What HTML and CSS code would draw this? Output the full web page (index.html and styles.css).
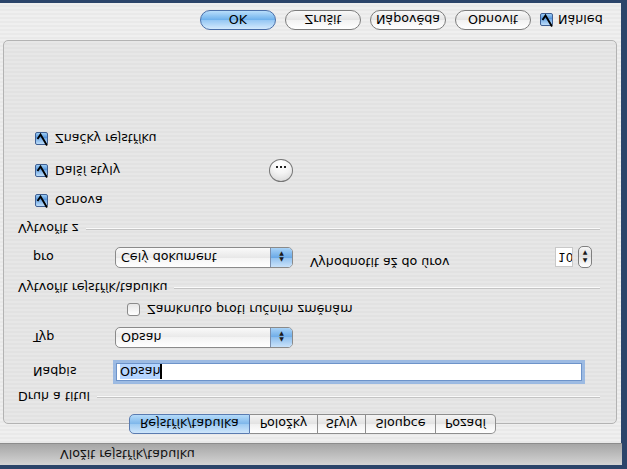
FILE: index.html
```html
<!DOCTYPE html>
<html lang="cs">
<head>
<meta charset="utf-8">
<title>Vložit rejstřík/tabulku</title>
<link rel="stylesheet" href="styles.css">
</head>
<body>
<div class="screen">
  <div class="window">
    <div class="titlebar">Vložit rejstřík/tabulku</div>
    <div class="body">
      <div class="tabs">
        <div class="tab tab-active t1">Rejstřík/tabulka</div>
        <div class="tab t2">Položky</div>
        <div class="tab t3">Styly</div>
        <div class="tab t4">Sloupce</div>
        <div class="tab t5">Pozadí</div>
      </div>
      <div class="panel">
        <div class="heading h1"><span>Druh a titul</span><i class="rule"></i></div>
        <div class="row r-nadpis">
          <span class="label">Nadpis</span>
          <div class="field"><span class="sel">Obsah</span><span class="caret"></span></div>
        </div>
        <div class="row r-typ">
          <span class="label">Typ</span>
          <div class="popup"><span class="pv">Obsah</span><span class="arrows"><b>▲</b><b>▼</b></span></div>
        </div>
        <div class="row r-zam">
          <span class="cb off"></span><span class="cbl">Zamknuto proti ručním změnám</span>
        </div>
        <div class="heading h2"><span>Vytvořit rejstřík\tabulku</span><i class="rule"></i></div>
        <div class="row r-pro">
          <span class="label">pro</span>
          <div class="popup"><span class="pv">Celý dokument</span><span class="arrows"><b>▲</b><b>▼</b></span></div>
          <span class="vyh">Vyhodnotit až do úrov</span>
          <div class="num">10</div>
          <div class="stepper"><b>▲</b><b>▼</b></div>
        </div>
        <div class="heading h3"><span>Vytvořit z</span><i class="rule"></i></div>
        <div class="row r-osn">
          <span class="cb on"><svg viewBox="0 0 13 13" width="13" height="13"><path d="M2.5 6 L5.5 10.5 L12 -0.5" fill="none" stroke="#000" stroke-width="1.9"/></svg></span><span class="cbl">Osnova</span>
        </div>
        <div class="row r-dal">
          <span class="cb on"><svg viewBox="0 0 13 13" width="13" height="13"><path d="M2.5 6 L5.5 10.5 L12 -0.5" fill="none" stroke="#000" stroke-width="1.9"/></svg></span><span class="cbl wide">Další styly</span>
          <div class="dots"><i></i><i></i><i></i></div>
        </div>
        <div class="row r-zn">
          <span class="cb on"><svg viewBox="0 0 13 13" width="13" height="13"><path d="M2.5 6 L5.5 10.5 L12 -0.5" fill="none" stroke="#000" stroke-width="1.9"/></svg></span><span class="cbl">Značky rejstříku</span>
        </div>
      </div>
      <div class="buttons">
        <div class="btn btn-def">OK</div>
        <div class="btn">Zrušit</div>
        <div class="btn">Nápověda</div>
        <div class="btn">Obnovit</div>
        <span class="cb on nah"><svg viewBox="0 0 13 13" width="13" height="13"><path d="M2.5 6 L5.5 10.5 L12 -0.5" fill="none" stroke="#000" stroke-width="1.9"/></svg></span><span class="cbl">Náhled</span>
      </div>
    </div>
  </div>
</div>
</body>
</html>
```
FILE: styles.css
```css
html, body { margin: 0; padding: 0; }
body { background: #2c456a; }
.screen {
  width: 627px; height: 469px; overflow: hidden;
  background: #2c456a;
  transform: scaleY(-1);
  font-family: "DejaVu Sans", "Liberation Sans", sans-serif;
  font-size: 12.7px; color: #000;
}
.window {
  width: 621px; height: 462px; margin-top: 4px;
  background: repeating-linear-gradient(180deg, #efefef 0 2px, #e9e9e9 2px 4px);
  display: flex; flex-direction: column;
}
.titlebar {
  width: 622px; height: 22px; box-sizing: border-box;
  background: linear-gradient(#d4d4d4, #a6a6a6);
  border-bottom: 1px solid #8c8c8c;
  padding-left: 60px; display: flex; align-items: center;
  color: #111;
}
.body { padding: 9px 0 0 3px; display: flex; flex-direction: column; }
.tabs {
  display: flex; margin-left: 126px; height: 20px; margin-bottom: -10px;
  position: relative; z-index: 1;
}
.tab {
  height: 20px; box-sizing: border-box;
  display: flex; align-items: center; justify-content: center;
  background: linear-gradient(#ffffff, #f0f0f0 50%, #e2e2e2 50%, #f4f4f4);
  border: 1px solid #8e8e8e; border-left: none;
}
.t1 { width: 121px; border-left: 1px solid #5a7bb0; border-radius: 5px 0 0 5px; }
.t2 { width: 68px; }
.t3 { width: 48px; }
.t4 { width: 70px; }
.t5 { width: 60px; border-radius: 0 5px 5px 0; }
.tab-active {
  background: linear-gradient(#cfe6fb, #9ccaf2 50%, #7db6ea 50%, #b4dbfa);
  border-color: #5a7bb0;
}
.panel {
  width: 614px; height: 384px; box-sizing: border-box;
  border: 1px solid #b3b3b3; border-radius: 5px;
  background: repeating-linear-gradient(180deg, #e7e7e7 0 2px, #e2e2e2 2px 4px);
  padding-top: 18px;
  display: flex; flex-direction: column;
}
.heading {
  height: 16px; display: flex; align-items: center;
  padding-left: 14px; padding-right: 16px;
}
.rule { flex: 1; height: 0; border-top: 1px solid #c4c4c4; border-bottom: 1px solid #fafafa; margin-left: 7px; }
.row { display: flex; align-items: center; padding-left: 29px; }
.label { width: 80px; flex: none; }
.r-nadpis { height: 22px; margin-top: 6px; }
.field {
  width: 466px; height: 18px; margin-left: 3px; box-sizing: border-box;
  background: #fff; border: 1px solid #6d93c9;
  box-shadow: 0 0 0 3px rgba(125, 168, 225, 0.7);
  display: flex; align-items: center; padding-left: 3px;
}
.sel { background: #b5d5ff; }
.caret { width: 2px; height: 15px; background: #000; }
.r-typ { height: 21px; margin-top: 13px; }
.popup {
  width: 178px; height: 21px; box-sizing: border-box; margin-left: 2px;
  border: 1px solid #8a8a8a; border-radius: 5px;
  background: linear-gradient(#ffffff, #f3f3f3 50%, #e8e8e8 50%, #fafafa);
  display: flex; align-items: center; overflow: hidden;
}
.pv { flex: 1; padding-left: 5px; }
.arrows {
  width: 21px; height: 100%; border-left: 1px solid #7a8fae;
  background: linear-gradient(#c9e2fa, #8fc0ee 50%, #6aa9e6 50%, #a8d3f8);
  display: flex; flex-direction: column; align-items: center; justify-content: center;
}
.arrows b, .stepper b { font-size: 6px; line-height: 6px; font-weight: normal; color: #1a1a1a; }
.r-zam { height: 14px; margin-top: 10px; padding-left: 123px; }
.cb {
  width: 13px; height: 13px; box-sizing: border-box; flex: none;
  border: 1px solid #3f5f93; border-radius: 2px;
  background: linear-gradient(#bcdcf9, #6fa8e4 55%, #4f8fd8 55%, #9ccdf5);
  display: flex; overflow: visible;
}
.cb svg { margin: -1px 0 0 -1px; overflow: visible; }
.cb.off { border-color: #8a8a8a; background: linear-gradient(#ffffff, #e6e6e6); border-radius: 3px; }
.cbl { margin-left: 7px; }
.r-pro { height: 21px; margin-top: 12px; }
.vyh { margin-left: 17px; margin-top: -10px; }
.num {
  margin-left: auto; width: 18px; height: 20px; box-sizing: border-box;
  background: #fff; border: 1px solid #c8c8c8;
  display: flex; align-items: center; padding-left: 2px; font-size: 12px; overflow: hidden;
}
.stepper {
  width: 14px; height: 22px; box-sizing: border-box; margin-left: 5px; margin-right: 24px;
  border: 1px solid #7f7f7f; border-radius: 5px;
  background: linear-gradient(#ffffff, #e6e6e6 50%, #dcdcdc 50%, #f6f6f6);
  display: flex; flex-direction: column; align-items: center; justify-content: center; gap: 2px;
}
.h3 { margin-top: 10px; }
.h2 { margin-top: 7px; }
.r-osn { height: 14px; margin-top: 13px; padding-left: 31px; }
.r-dal { height: 24px; margin-top: 11px; padding-left: 31px; }
.wide { width: 214px; }
.dots {
  width: 24px; height: 23px; box-sizing: border-box; border-radius: 50%;
  border: 1px solid #767676;
  background: radial-gradient(circle at 50% 80%, #ffffff, #f4f4f4 45%, #d2d2d2);
  display: flex; align-items: flex-end; justify-content: center; gap: 2px;
  padding-bottom: 6px;
}
.dots i { width: 2px; height: 2px; background: #222; }
.r-zn { height: 14px; margin-top: 13px; padding-left: 31px; }
.buttons {
  display: flex; align-items: center; height: 20px; margin-top: 10px; padding-left: 197px;
}
.btn {
  width: 76px; height: 20px; box-sizing: border-box; margin-right: 9px;
  border: 1px solid #7c7c7c; border-radius: 10px;
  background: linear-gradient(#ffffff, #f2f2f2 50%, #e3e3e3 50%, #f9f9f9);
  display: flex; align-items: center; justify-content: center;
}
.btn-def {
  border-color: #4a6fa8;
  background: linear-gradient(#d4eafd, #94c6f3 50%, #6cb0ec 50%, #b8defb);
}
.buttons .cbl { margin-left: 5px; }
```
